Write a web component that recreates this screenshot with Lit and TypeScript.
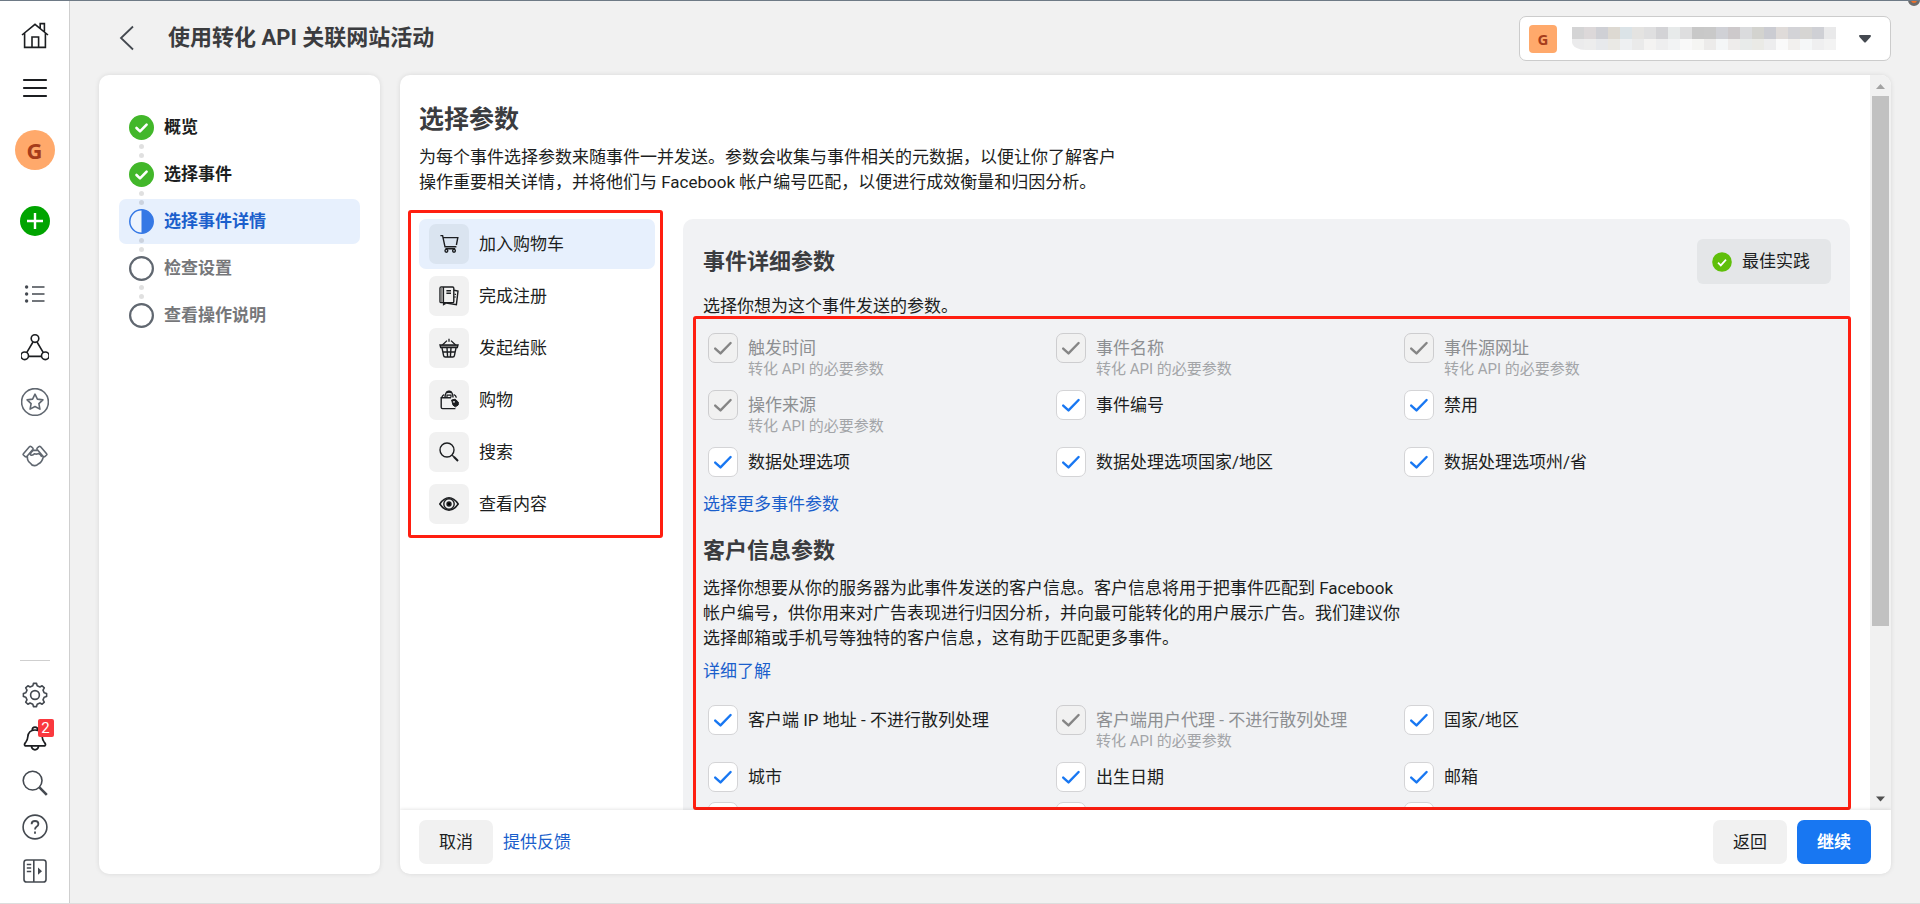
import { LitElement, html, svg, css, nothing } from "lit";
import { customElement } from "lit/decorators.js";
import { classMap } from "lit/directives/class-map.js";

type Param = { label: string; required?: boolean };
type Step = { label: string; state: "done" | "current" | "todo" };

const steps: Step[] = [
  { label: "概览", state: "done" },
  { label: "选择事件", state: "done" },
  { label: "选择事件详情", state: "current" },
  { label: "检查设置", state: "todo" },
  { label: "查看操作说明", state: "todo" },
];

const eventParams: Param[] = [
  { label: "触发时间", required: true },
  { label: "事件名称", required: true },
  { label: "事件源网址", required: true },
  { label: "操作来源", required: true },
  { label: "事件编号" },
  { label: "禁用" },
  { label: "数据处理选项" },
  { label: "数据处理选项国家/地区" },
  { label: "数据处理选项州/省" },
];

const customerParams: Param[] = [
  { label: "客户端 IP 地址 - 不进行散列处理" },
  { label: "客户端用户代理 - 不进行散列处理", required: true },
  { label: "国家/地区" },
  { label: "城市" },
  { label: "出生日期" },
  { label: "邮箱" },
  { label: "" },
  { label: "点击编号 (Click ID) - 不进行散列处理" },
  { label: "" },
];

// 20x20 glyphs for the event list tiles
const cart = svg`<path d="M1.400 1.600h2.200l2.400 11.200h11.400M4.200 3.600h14.600l-1.400 7.400M6.400 14.800h9.800"/><circle cx="7.400" cy="16.800" r="1.400"/><circle cx="15" cy="16.800" r="1.400"/>`;
const book = svg`<path d="M15 4.2l4 .8-1.6 13.6-11.6-1.8" /><rect x="1" y="1" width="13.8" height="15.6" rx="1.2" fill="#f1f1f1"/><path d="M4.4 1v15.6"/><path d="M2.6 1.6v14.4" stroke="#888" stroke-width="2"/><path d="M7.4 4.8h4.6M7.4 7.2h4.6M15.6 8.4h1.4M15.4 11h1.2"/><path d="M4.6 16.6v2l2-1.2"/>`;
const basket = svg`<path d="M3.4 7L8 2.6M16.6 7L12 2.6M10 .8v3" stroke-width="1.3"/><path d="M1 7h18l-.7 2.6H1.7z" fill="#777"/><path d="M3 9.8l1.6 7.8q.2 1.4 1.6 1.4h7.6q1.400 0 1.600-1.400L17 9.800M4 14h12M8 9.800l.6 9M12 9.800l-.6 9"/>`;
const bag = svg`<path d="M12 7.800H2.200v9.400q0 1.400 1.400 1.400h12.800M2.800 7.400q.6-2.200 2.400-2.800M14.800 4.600q2 .6 2.600 3" /><path d="M6 7.600q0-3 1-4.600 3-3 6 0 1 1.600 1 4.600" /><path d="M8 7.400V5.200h4v2.200" stroke-width="1.200"/><path d="M7.600 2.600q2.400-2 4.800 0" stroke-width="2"/><path d="M12.600 10l3.600-.8 3.200 3-.2 2.800-2.800 1.800-2.400-1.600z" fill="#1c1e21" stroke-width="1"/><circle cx="15" cy="11.800" r=".9" fill="#fff" stroke="none"/>`;
const magnifier = svg`<circle cx="8" cy="8" r="7"/><path d="M13.200 13.200l1.600 1.600"/><path d="M14.800 14.800l4.200 4.200" stroke-width="2"/>`;
const eye = svg`<path d="M.8 10Q5 3.800 10 3.800T19.200 10Q15 16.200 10 16.200T.8 10z" stroke-width="1.600"/><circle cx="10" cy="10" r="5.200"/><circle cx="10" cy="10" r="2" fill="#000"/>`;

const events = [
  { label: "加入购物车", icon: cart, active: true },
  { label: "完成注册", icon: book },
  { label: "发起结账", icon: basket },
  { label: "购物", icon: bag },
  { label: "搜索", icon: magnifier },
  { label: "查看内容", icon: eye },
];

const gearPath = (() => {
  const pts: string[] = [];
  const teeth = 8;
  for (let i = 0; i < teeth; i++) {
    for (const [off, r] of [[-0.3, 9.4], [-0.17, 11.7], [0.17, 11.7], [0.3, 9.4]]) {
      const a = ((i + off) / teeth) * Math.PI * 2;
      pts.push(`${(14 + r * Math.sin(a)).toFixed(2)} ${(14 - r * Math.cos(a)).toFixed(2)}`);
    }
  }
  return `M${pts.join("L")}Z`;
})();

const home = svg`<path d="M1 13L14 2.400 27 13M3.600 11v14.400h20.800V11M19.200 6.400V1.600h4.200V10M11 25.400V15h6.600v10.400"/>`;
const menu = svg`<path d="M3 6h22M3 14h22M3 22h22" stroke-width="2.200" stroke-linecap="round"/>`;
const list = svg`<g fill="#444950" stroke="none"><circle cx="5.600" cy="7" r="1.700"/><circle cx="5.600" cy="14" r="1.700"/><circle cx="5.600" cy="21" r="1.700"/></g><path d="M11 7h12.500M11 14h12.500M11 21h12.500" stroke-width="1.600"/>`;
const triangle = svg`<circle cx="14" cy="4.600" r="3.800"/><circle cx="3.700" cy="21.800" r="3.800"/><circle cx="24.300" cy="21.800" r="3.800"/><path d="M12 8L5.700 18.600M16 8l6.300 10.600M7.500 22.400h13"/>`;
const star = svg`<circle cx="14" cy="14" r="13.400"/><path d="M14 6.200l2.400 4.900 5.500.8-4 3.800 1 5.400-4.900-2.600-4.900 2.600 1-5.400-4-3.800 5.500-.8z" stroke-linejoin="round"/>`;
const handshake = svg`<path d="M2.400 11.800l6-7q.8-.8 1.800-.2l1.600 1.400q.6.600 0 1.400l-6 7q-.8.800-1.600.2L2.400 13q-.6-.6 0-1.200zM25.600 11.800l-6-7q-.8-.8-1.800-.2l-1.600 1.400q-.6.600 0 1.400l6 7q.8.800 1.600.2l1.800-1.600q.6-.6 0-1.200zM11.600 8.400h5M6.400 14.400q-.4 4.600 3.200 7 1 2.200 3.800 2.200 2.200.2 3.800-1.600 3.800-1.800 5-6.800M12 8.600q-2.800 1.800-2.600 4.200 2.200 1.200 4-1 2.200.8 3.800-.2 2.400.8 3.600 3.200" stroke-linejoin="round"/>`;
const gear = svg`<path d="${gearPath}" stroke-linejoin="round"/><circle cx="14" cy="14" r="4.400"/>`;
const bell = svg`<path d="M11.200 5.200q0-3 2.800-3t2.800 3M4 20.800q-1.400-1.600 1-4 1.600-1.800 1.800-5Q7.400 5 14 5t7.200 6.800q.2 3.200 1.800 5 2.400 2.400 1 4zM10.400 21.400q.6 3.400 3.600 3.400t3.600-3.400" stroke="#1c1e21" stroke-width="1.700" stroke-linejoin="round"/>`;
const find = svg`<circle cx="11.600" cy="11.600" r="9.400"/><path d="M18.400 18.400l7.400 7.400" stroke-width="2.600"/>`;
const help = svg`<circle cx="14" cy="14" r="11.900"/><path d="M10.600 11.200q0-3.200 3.400-3.200t3.400 3q0 1.600-1.900 2.700Q14 14.700 14 16.600M14 18.600v2.200" stroke-width="1.800"/>`;
const sidebarIcon = svg`<rect x="3" y="3" width="22" height="22" rx="2.600"/><path d="M12.800 3v22"/><path d="M5.800 7.600h4.400M5.800 11h4.400M5.800 14.400h4.400" stroke-width="1.500"/><path d="M17 10.600l4 3.600-4 3.600z" fill="#444950" stroke="none"/>`;

const railMain = [
  { name: "列表", icon: list, tone: "grey" },
  { name: "事件", icon: triangle, tone: "dark" },
  { name: "收藏", icon: star, tone: "slate" },
  { name: "合作", icon: handshake, tone: "slate" },
];
const railFoot = [
  { name: "设置", icon: gear },
  { name: "通知", icon: bell, badge: "2" },
  { name: "搜索", icon: find },
  { name: "帮助", icon: help },
  { name: "展开侧栏", icon: sidebarIcon },
];

// two rows of tiles that mask the account name
const maskTop = "#d4d4d5 #dcd8d9 #cfd0d5 #ddd9d2 #dbe3e7 #e4e3e1 #dfdfe0 #d3d3d6 #e7eaea #dededf #c8c8c8 #c9c9c9 #d0d1d6 #cdc9cb #dadbdd #d3d3cf #cbccd2 #dfdbd9 #d3d3d7 #d6d5d3 #cfd0d5 #e9e9ea".split(" ");
const maskBottom = "#ebebec #ededed #e7e9ec #eae9e5 #eef0f2 #eaeaea #f4f3f2 #eeeeef #f2f3f4 #f9f9f9 #f5f5f3 #ecebea #f4f6f7 #eeeceb #e8ebea #eaeae6 #ededee #fafafa #f2f0ee #f5f7f8 #efeff0 #f3f3f3".split(" ");

@customElement("app-root")
export class AppRoot extends LitElement {
  static styles = css`
    :host {
      display: flex;
      box-sizing: border-box;
      height: 100vh;
      border-top: 1px solid #6e7a86;
      border-bottom: 1px solid #dddddd;
      background: #f1f1f1;
      color: #1c1e21;
      font: 17px/25px Roboto, "Noto Sans CJK SC", sans-serif;
      position: relative;
      overflow: hidden;
    }
    *, *::before, *::after { box-sizing: border-box; }
    button {
      font: inherit;
      color: inherit;
      border: 0;
      background: none;
      padding: 0;
      margin: 0;
    }
    a { color: #1b5fcc; text-decoration: none; }
    h1, h2, h3, p, ul, ol { margin: 0; padding: 0; }
    ul, ol { list-style: none; }
    svg { fill: none; display: block; }

    .corner {
      position: absolute;
      top: -7px;
      right: 0;
      width: 12px;
      height: 12px;
      border-radius: 50%;
      border: 3px solid #6b6b6b;
      background: #f0702a;
    }
    .rail {
      flex: none;
      width: 70px;
      padding: 9px 0 10px;
      background: #fff;
      border-right: 1px solid #cfcfcf;
      display: flex;
      flex-direction: column;
      align-items: center;
      color: #444950;
    }
    .rail svg { width: 28px; height: 28px; stroke: currentColor; stroke-width: 1.6; }
    .rail-btn { display: grid; place-items: center; width: 56px; height: 52px; position: relative; }
    .rail-main .rail-btn { height: 54px; }
    .rail-foot .rail-btn { height: 44px; }
    .dark { color: #1c1e21; }
    .slate { color: #606770; }
    .grey { color: #444950; }
    .avatar {
      width: 40px;
      height: 40px;
      margin: 16px 0 36px;
      border-radius: 50%;
      background: #ffa96b;
      color: #a63d1b;
      font: 700 22px/40px "Noto Sans", sans-serif;
      text-align: center;
    }
    .create {
      width: 30px;
      height: 30px;
      margin-bottom: 31px;
      border-radius: 50%;
      background: #00a400;
      color: #fff;
      display: grid;
      place-items: center;
    }
    .rail .create svg { width: 18px; height: 18px; stroke-width: 2.4; }
    .rail-rule { width: 30px; height: 1px; background: #cfcfcf; margin: auto 0 12px; }
    .badge {
      position: absolute;
      left: 31px;
      top: 2px;
      width: 16px;
      height: 18px;
      border-radius: 2px;
      background: #fa383e;
      color: #fff;
      font-size: 15px;
      line-height: 18px;
      text-align: center;
    }

    .page {
      flex: 1;
      min-width: 0;
      display: flex;
      flex-direction: column;
      padding: 0 29px 29px 29px;
    }
    .topbar { flex: none; height: 74px; display: flex; align-items: center; }
    .back { margin-left: 19px; width: 20px; height: 26px; }
    .back svg { stroke: #444950; stroke-width: 1.8; }
    .title { flex: 1; margin-left: 30px; font-size: 22px; line-height: 30px; font-weight: 700; color: #3b3c3f; }
    .account {
      display: flex;
      align-items: center;
      width: 372px;
      height: 45px;
      margin-top: 1px;
      padding: 0 18px 0 9px;
      border: 1px solid #cccccc;
      border-radius: 7px;
      background: #fff;
    }
    .account-logo {
      width: 28px;
      height: 28px;
      border-radius: 4px;
      background: #ffa96b;
      color: #a63d1b;
      font: 700 15px/28px "Noto Sans", sans-serif;
      text-align: center;
    }
    .mask { width: 264px; height: 23px; margin: 0 auto 0 15px; border-bottom-left-radius: 14px 8px; }
    .columns { flex: 1; min-height: 0; display: flex; gap: 20px; }
    .panel { background: #fff; border-radius: 10px; box-shadow: 0 0 5px rgba(0, 0, 0, 0.1); }

    .steps { flex: none; width: 281px; padding: 30px 20px; }
    .step {
      position: relative;
      display: flex;
      align-items: center;
      gap: 10px;
      height: 45px;
      margin-bottom: 2px;
      padding-left: 10px;
      border-radius: 7px;
      font-weight: 700;
    }
    .step svg { width: 25px; height: 25px; }
    .step.current { background: #e7f0fd; color: #1b5fcc; }
    .step.todo { color: #76777a; }
    .step:not(:last-child)::before,
    .step:not(:first-child)::after {
      content: "";
      position: absolute;
      left: 20px;
      width: 5px;
      height: 5px;
      border-radius: 50%;
      background: rgba(0, 0, 0, 0.12);
    }
    .step::before { bottom: 1px; }
    .step::after { top: 1px; }

    .main { flex: 1; min-width: 0; display: flex; flex-direction: column; overflow: hidden; }
    .body { flex: 1; min-height: 0; display: flex; position: relative; }
    .scroller { flex: 1; min-width: 0; overflow-y: auto; scrollbar-width: none; padding: 30px 20px 20px 19px; }
    .heading { font-size: 25px; line-height: 30px; font-weight: 700; color: #3b3c3f; }
    .copy { max-width: 702px; }
    .scroller > .copy { margin: 10px 0 24px; }
    .workspace { display: flex; align-items: flex-start; gap: 28px; }
    .events { flex: none; width: 236px; display: grid; gap: 2px; position: relative; }
    .event {
      display: flex;
      align-items: center;
      gap: 10px;
      width: 100%;
      height: 50px;
      padding-left: 10px;
      border-radius: 7px;
      text-align: left;
    }
    .event.active { background: #e7f0fd; }
    .tile { width: 40px; height: 40px; border-radius: 7px; background: #f1f1f1; display: grid; place-items: center; }
    .active .tile { background: #dae4f0; }
    .tile svg { width: 20px; height: 20px; stroke: #1c1e21; stroke-width: 1.4; }
    .mark { position: absolute; border: 3px solid #ff1e10; border-radius: 3px; pointer-events: none; }
    .mark-events { inset: -9px -8px -9px -11px; }
    .mark-params { inset: 241px 40px 0 293px; }

    .card { flex: 1; min-width: 0; background: #f1f2f4; border-radius: 10px; padding: 20px 19px 20px 20px; }
    .card-head { display: flex; justify-content: space-between; align-items: center; margin-bottom: 10px; }
    .subhead { font-size: 22px; line-height: 30px; font-weight: 700; color: #3b3c3f; }
    .practice {
      display: flex;
      align-items: center;
      gap: 10px;
      height: 45px;
      padding: 0 21px 0 15px;
      border-radius: 6px;
      background: #e4e6e8;
    }
    .params { display: grid; grid-template-columns: repeat(3, minmax(0, 348px)); row-gap: 10px; padding: 0 0 0 5px; margin: 14px 0 15px; }
    .param { display: grid; grid-template-columns: 30px 1fr; column-gap: 10px; align-items: start; }
    .box { display: grid; }
    .box > * { grid-area: 1 / 1; }
    .box input {
      appearance: none;
      width: 30px;
      height: 30px;
      margin: 0;
      border: 1px solid #d4d4d6;
      border-radius: 7px;
      background: #fff;
    }
    .box svg { stroke: #1877f2; stroke-width: 2.4; stroke-linecap: round; stroke-linejoin: round; pointer-events: none; }
    .box input:disabled { background: #f1f1f1; border-color: #cdcdcf; }
    .box input:disabled + svg { stroke: #858585; }
    .label { padding-top: 3px; }
    .required .label { color: #8d8f92; }
    .hint { display: block; font-size: 15px; line-height: 17px; padding-bottom: 2px; color: #a3a5a8; }
    .more { display: block; }
    .customer { margin: 19px 0 10px; }
    .learn { margin-top: 8px; }
    .learn + .params { margin-top: 21px; }

    .scrollbar {
      flex: none;
      width: 21px;
      background: #f1f1f1;
      display: flex;
      flex-direction: column;
      align-items: center;
    }
    .scrollbar svg { height: 21px; width: 21px; flex: none; }
    .thumb { width: 17px; height: 530px; background: #c1c1c1; }
    .thumb + svg { margin-top: auto; }
    .footer {
      flex: none;
      display: flex;
      align-items: center;
      gap: 10px;
      padding: 10px 20px 10px 19px;
      height: 64px;
      box-shadow: 0 0 4px rgba(0, 0, 0, 0.15);
      position: relative;
      background: #fff;
    }
    .footer button { height: 44px; padding: 0 20px; border-radius: 7px; background: #f1f1f1; }
    .footer a { margin-right: auto; }
    .footer .primary { background: #1877f2; color: #fff; font-weight: 700; }
  `;

  private stepIcon(state: Step["state"]) {
    if (state === "done")
      return html`<svg viewBox="0 0 25 25"><circle cx="12.5" cy="12.5" r="12.5" fill="#42b72a"/><path d="M7.500 13l3.500 3.400L17.600 9.600" stroke="#fff" stroke-width="2.600" stroke-linecap="round" stroke-linejoin="round"/></svg>`;
    if (state === "current")
      return html`<svg viewBox="0 0 25 25"><circle cx="12.500" cy="12.500" r="11.700" fill="#eef4fd" stroke="#3578e5" stroke-width="1.500"/><path d="M12.500 .8a11.700 11.700 0 0 1 0 23.400z" fill="#3578e5"/></svg>`;
    return html`<svg viewBox="0 0 25 25"><circle cx="12.500" cy="12.500" r="11.400" fill="#fff" stroke="#606770" stroke-width="2.200"/></svg>`;
  }

  private paramGrid(prefix: string, params: Param[]) {
    return html`<div class="params">
      ${params.map(
        (p, i) => html`<div class=${classMap({ param: true, required: !!p.required })}>
          <span class="box">
            <input type="checkbox" id="${prefix}${i}" checked ?disabled=${!!p.required} />
            <svg width="30" height="30" viewBox="0 0 30 30"><path d="M7.200 15.600l5.300 4.800L22.600 10"/></svg>
          </span>
          <label class="label" for="${prefix}${i}">${p.label}${p.required ? html`<span class="hint">转化 API 的必要参数</span>` : nothing}</label>
        </div>`
      )}
    </div>`;
  }

  render() {
    return html`
      <nav class="rail">
        <button class="rail-btn dark" aria-label="主页"><svg viewBox="0 0 28 28">${home}</svg></button>
        <button class="rail-btn dark" aria-label="菜单"><svg viewBox="0 0 28 28">${menu}</svg></button>
        <button class="avatar">G</button>
        <button class="create" aria-label="创建"><svg viewBox="0 0 18 18"><path d="M9 1v16M1 9h16"/></svg></button>
        <div class="rail-main">
          ${railMain.map((r) => html`<button class="rail-btn ${r.tone}" aria-label=${r.name}><svg viewBox="0 0 28 28">${r.icon}</svg></button>`)}
        </div>
        <div class="rail-rule"></div>
        <div class="rail-foot">
          ${railFoot.map((r) => html`<button class="rail-btn" aria-label=${r.name}><svg viewBox="0 0 28 28">${r.icon}</svg>${r.badge ? html`<span class="badge">${r.badge}</span>` : nothing}</button>`)}
        </div>
      </nav>
      <div class="page">
        <header class="topbar">
          <button class="back" aria-label="后退"><svg width="20" height="26" viewBox="0 0 20 26"><path d="M15 1.500L3 13l12 11.500"/></svg></button>
          <h1 class="title">使用转化 API 关联网站活动</h1>
          <button class="account" aria-label="选择帐户">
            <span class="account-logo">G</span>
            <svg class="mask" viewBox="0 0 264 23">
              ${maskTop.map((c, i) => svg`<rect x=${i * 12} y="0" width="12" height="12" fill=${c} />`)}
              ${maskBottom.map((c, i) => svg`<rect x=${i * 12} y="12" width="12" height="11" fill=${c} />`)}
            </svg>
            <svg width="14" height="10" viewBox="0 0 14 10"><path d="M1.500 1h11q1 .8 0 2L8 8q-1 1-2 0L1.500 3q-1-1.200 0-2z" fill="#444950"/></svg>
          </button>
        </header>
        <div class="columns">
          <aside class="panel steps">
            <ol>
              ${steps.map((s) => html`<li class="step ${s.state}">${this.stepIcon(s.state)}<span>${s.label}</span></li>`)}
            </ol>
          </aside>
          <main class="panel main">
            <div class="body">
              <div class="scroller">
                <h2 class="heading">选择参数</h2>
                <p class="copy">为每个事件选择参数来随事件一并发送。参数会收集与事件相关的元数据，以便让你了解客户操作重要相关详情，并将他们与 Facebook 帐户编号匹配，以便进行成效衡量和归因分析。</p>
                <div class="workspace">
                  <div class="events">
                    ${events.map(
                      (e) => html`<button class=${classMap({ event: true, active: !!e.active })}><span class="tile"><svg viewBox="0 0 20 20">${e.icon}</svg></span>${e.label}</button>`
                    )}
                    <span class="mark mark-events"></span>
                  </div>
                  <section class="card">
                    <div class="card-head">
                      <h3 class="subhead">事件详细参数</h3>
                      <button class="practice">
                        <svg width="20" height="20" viewBox="0 0 20 20"><circle cx="10" cy="10" r="9.800" fill="#5fbf0a"/><path d="M6 10.600l2.800 2.800L14 7.600" stroke="#fff" stroke-width="1.700"/></svg>
                        最佳实践
                      </button>
                    </div>
                    <p class="copy">选择你想为这个事件发送的参数。</p>
                    ${this.paramGrid("event", eventParams)}
                    <a class="more" href="#">选择更多事件参数</a>
                    <h3 class="subhead customer">客户信息参数</h3>
                    <p class="copy">选择你想要从你的服务器为此事件发送的客户信息。客户信息将用于把事件匹配到 Facebook 帐户编号，供你用来对广告表现进行归因分析，并向最可能转化的用户展示广告。我们建议你选择邮箱或手机号等独特的客户信息，这有助于匹配更多事件。</p>
                    <a class="more learn" href="#">详细了解</a>
                    ${this.paramGrid("customer", customerParams)}
                  </section>
                </div>
              </div>
              <div class="scrollbar">
                <svg viewBox="0 0 21 21"><path d="M6 14l4.500-5 4.500 5z" fill="#a3a3a3"/></svg>
                <div class="thumb"></div>
                <svg viewBox="0 0 21 21"><path d="M6 7.500h9l-4.500 5z" fill="#505050"/></svg>
              </div>
              <span class="mark mark-params"></span>
            </div>
            <footer class="footer">
              <button>取消</button>
              <a href="#">提供反馈</a>
              <button>返回</button>
              <button class="primary">继续</button>
            </footer>
          </main>
        </div>
      </div>
      <span class="corner"></span>
    `;
  }
}
